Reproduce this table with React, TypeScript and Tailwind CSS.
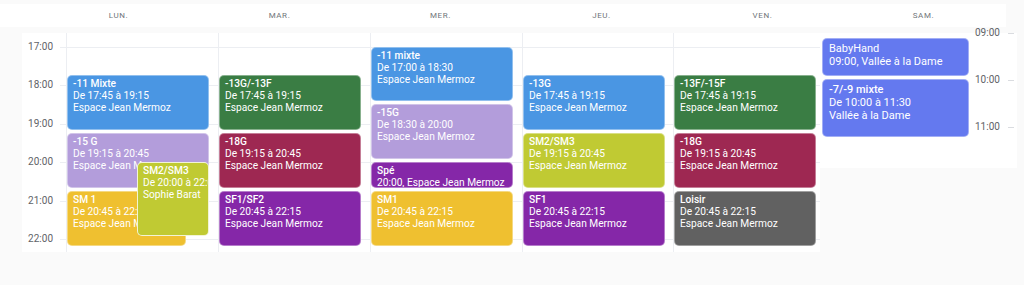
import React from 'react';

interface CalEvent {
  title: string;
  lines: string[];
  start: number;
  end: number;
  color: string;
  left?: number;
  width?: number;
  front?: boolean;
}

const HOUR = 38.6;
const OFFSET = 13.5;

const days: { label: string; width: string; events: CalEvent[] }[] = [
  {
    label: 'LUN.',
    width: 'w-[152px]',
    events: [
      { title: '-11 Mixte', lines: ['De 17:45 à 19:15', 'Espace Jean Mermoz'], start: 17.75, end: 19.25, color: 'bg-[#4a96e3]' },
      { title: '-15 G', lines: ['De 19:15 à 20:45', 'Espace Jean Mermoz'], start: 19.25, end: 20.75, color: 'bg-[#b39ddb]' },
      { title: 'SM 1', lines: ['De 20:45 à 22:15', 'Espace Jean Mermoz'], start: 20.75, end: 22.25, color: 'bg-[#efc030]', width: 119 },
      { title: 'SM2/SM3', lines: ['De 20:00 à 22:00', 'Sophie Barat'], start: 20, end: 22, color: 'bg-[#c0ca33]', left: 70, width: 72, front: true },
    ],
  },
  {
    label: 'MAR.',
    width: 'w-[152px]',
    events: [
      { title: '-13G/-13F', lines: ['De 17:45 à 19:15', 'Espace Jean Mermoz'], start: 17.75, end: 19.25, color: 'bg-[#3a7d44]' },
      { title: '-18G', lines: ['De 19:15 à 20:45', 'Espace Jean Mermoz'], start: 19.25, end: 20.75, color: 'bg-[#9e2852]' },
      { title: 'SF1/SF2', lines: ['De 20:45 à 22:15', 'Espace Jean Mermoz'], start: 20.75, end: 22.25, color: 'bg-[#8527a8]' },
    ],
  },
  {
    label: 'MER.',
    width: 'w-[152px]',
    events: [
      { title: '-11 mixte', lines: ['De 17:00 à 18:30', 'Espace Jean Mermoz'], start: 17, end: 18.5, color: 'bg-[#4a96e3]' },
      { title: '-15G', lines: ['De 18:30 à 20:00', 'Espace Jean Mermoz'], start: 18.5, end: 20, color: 'bg-[#b39ddb]' },
      { title: 'Spé', lines: ['20:00, Espace Jean Mermoz'], start: 20, end: 20.75, color: 'bg-[#8527a8]' },
      { title: 'SM1', lines: ['De 20:45 à 22:15', 'Espace Jean Mermoz'], start: 20.75, end: 22.25, color: 'bg-[#efc030]' },
    ],
  },
  {
    label: 'JEU.',
    width: 'w-[151px]',
    events: [
      { title: '-13G', lines: ['De 17:45 à 19:15', 'Espace Jean Mermoz'], start: 17.75, end: 19.25, color: 'bg-[#4a96e3]' },
      { title: 'SM2/SM3', lines: ['De 19:15 à 20:45', 'Espace Jean Mermoz'], start: 19.25, end: 20.75, color: 'bg-[#c0ca33]' },
      { title: 'SF1', lines: ['De 20:45 à 22:15', 'Espace Jean Mermoz'], start: 20.75, end: 22.25, color: 'bg-[#8527a8]' },
    ],
  },
  {
    label: 'VEN.',
    width: 'flex-1',
    events: [
      { title: '-13F/-15F', lines: ['De 17:45 à 19:15', 'Espace Jean Mermoz'], start: 17.75, end: 19.25, color: 'bg-[#3a7d44]' },
      { title: '-18G', lines: ['De 19:15 à 20:45', 'Espace Jean Mermoz'], start: 19.25, end: 20.75, color: 'bg-[#9e2852]' },
      { title: 'Loisir', lines: ['De 20:45 à 22:15', 'Espace Jean Mermoz'], start: 20.75, end: 22.25, color: 'bg-[#616161]' },
    ],
  },
];

const hours = ['17:00', '18:00', '19:00', '20:00', '21:00', '22:00'];

export default function App() {
  return (
    <div className="w-[1024px] h-[285px] bg-[#fafafa] font-['Roboto',sans-serif] overflow-hidden">
      {/* Header */}
      <div className="mt-[4px] h-[23px] w-[1006px] bg-white flex items-center pl-[38px]">
        {[...days.map((d) => d.label), 'SAM.'].map((l) => (
          <div key={l} className="w-[161px] text-center text-[8px] tracking-[0.6px] text-[#70757a]">
            {l}
          </div>
        ))}
      </div>

      <div className="flex items-start mt-[6px] ml-[22px]">
        {/* Week grid */}
        <div className="relative flex h-[219px] w-[798px] bg-white">
          {/* Hour lines */}
          <div className="absolute inset-0 pt-[13.5px] pl-[38px] pointer-events-none">
            {hours.map((h) => (
              <div key={h} className="h-[38.6px] border-t border-[#eceef2]" />
            ))}
          </div>

          {/* Time labels */}
          <div className="relative w-[44px] pt-[7.5px]">
            {hours.map((h) => (
              <div key={h} className="h-[38.6px] pr-[13px] text-right text-[10px] leading-[12px] text-[#5f6368]">
                {h}
              </div>
            ))}
          </div>

          {days.map((d) => (
            <div key={d.label} className={`relative h-full border-l border-[#eceef2] ${d.width}`}>
              {d.events.map((e) => (
                <EventCard key={e.title + e.start} ev={e} />
              ))}
            </div>
          ))}
        </div>

        {/* Saturday */}
        <div className="flex bg-white">
          <div className="w-[153px] h-[109px] pt-[5px] pl-[2px] pr-[4px] flex flex-col gap-[3px]">
            <div className="h-[38px] rounded-[5px] bg-[#6479ef] border border-white/40 px-[6px] pt-[3px] text-white text-[11px] leading-[13px]">
              <div>BabyHand</div>
              <div>09:00, Vallée à la Dame</div>
            </div>
            <div className="h-[58px] rounded-[5px] bg-[#6479ef] border border-white/40 px-[6px] pt-[3px] text-white text-[11px] leading-[13px]">
              <div className="font-medium">-7/-9 mixte</div>
              <div>De 10:00 à 11:30</div>
              <div>Vallée à la Dame</div>
            </div>
          </div>
          <div className="w-[44px] -mt-[6px] pl-[2px]">
            {['09:00', '10:00', '11:00'].map((h) => (
              <div key={h} className="h-[47px] flex items-start">
                <span className="w-[33px] text-[10px] leading-[12px] text-[#5f6368]">{h}</span>
                <span className="mt-[6px] h-px w-[6px] bg-[#dadce0]" />
              </div>
            ))}
          </div>
        </div>
      </div>
    </div>
  );
}

function EventCard({ ev }: { ev: CalEvent }) {
  const top = OFFSET + (ev.start - 17) * HOUR;
  const height = (ev.end - ev.start) * HOUR - 3;
  return (
    <div
      className={`absolute overflow-hidden rounded-[5px] border ${ev.front ? 'z-10 border-white/80' : 'border-white/40'} ${ev.color} px-[5px] pt-[2px] text-white text-[10.2px] leading-[12px] whitespace-nowrap`}
      style={{ top, height, left: ev.left ?? 0, width: ev.width ?? 142 }}
    >
      <div className="font-medium">{ev.title}</div>
      {ev.lines.map((l) => (
        <div key={l}>{l}</div>
      ))}
    </div>
  );
}
